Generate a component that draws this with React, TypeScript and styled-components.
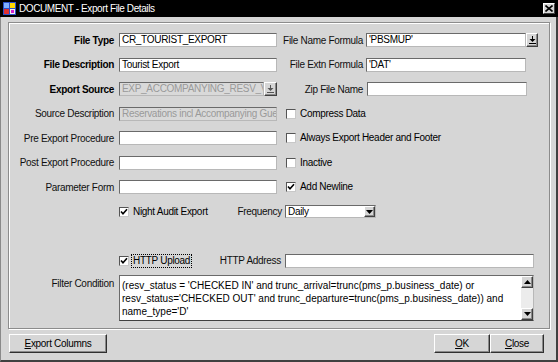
import React from 'react';
import styled, { createGlobalStyle } from 'styled-components';

const FONT = `"Liberation Sans", Arial, sans-serif`;
const GRAY = '#d6d6d6';

const GlobalStyle = createGlobalStyle`
  html, body { margin: 0; padding: 0; background: ${GRAY}; }
  body { width: 558px; height: 362px; overflow: hidden; font-family: ${FONT}; font-size: 10px; letter-spacing: -0.3px; color: #000; }
  * { box-sizing: border-box; }
`;

const Window = styled.div`
  width: 558px;
  height: 362px;
  display: flex;
  flex-direction: column;
  background: ${GRAY};
`;

const TitleBar = styled.div`
  height: 17px;
  background: #000;
  color: #fff;
  display: flex;
  align-items: center;
  padding: 0 3px 0 3px;
  gap: 3px;
`;

const TitleText = styled.span`
  flex: 1;
  line-height: 17px;
  font-size: 10px;
  letter-spacing: -0.4px;
`;

const CloseBox = styled.div`
  width: 12px;
  height: 11px;
  background: ${GRAY};
  border: 1px solid;
  border-color: #fff #404040 #404040 #fff;
  display: flex;
  align-items: center;
  justify-content: center;
`;

const Body = styled.div`
  flex: 1;
  display: flex;
  flex-direction: column;
  border-left: 1px solid #8a8a8a;
  border-right: 2px solid #404040;
  border-bottom: 2px solid #404040;
  padding: 5px 6px 0 7px;
`;

const Panel = styled.div`
  height: 307px;
  border: 1px solid #8c8c8c;
  box-shadow: inset 1px 1px 0 #fff, 1px 1px 0 #fff;
  padding: 5px 0 0 0;
  display: flex;
  flex-direction: column;
`;

const Row = styled.div<{ $h?: number }>`
  display: flex;
  align-items: center;
  height: ${p => p.$h ?? 24.5}px;
`;

const TopRow = styled.div`
  display: flex;
  align-items: flex-start;
  margin-top: 2px;
`;

const Label = styled.span<{ $w: number; $bold?: boolean; $mr?: number; $pt?: number }>`
  width: ${p => p.$w}px;
  flex-shrink: 0;
  display: flex;
  justify-content: flex-end;
  margin-right: ${p => p.$mr ?? 5}px;
  padding-top: ${p => p.$pt ?? 0}px;
  font-weight: ${p => (p.$bold ? 700 : 400)};
  white-space: nowrap;
  color: ${p => (p.$bold ? '#000' : '#101010')};
`;

const Input = styled.div<{ $w: number; $disabled?: boolean }>`
  width: ${p => p.$w}px;
  flex-shrink: 0;
  height: 14px;
  background: ${p => (p.$disabled ? '#d9d9d9' : '#fff')};
  color: ${p => (p.$disabled ? '#9a9a9a' : '#000')};
  border: 1px solid;
  border-color: #6a6a6a #b8b8b8 #b8b8b8 #6a6a6a;
  padding: 0 2px;
  line-height: 12px;
  white-space: nowrap;
  overflow: hidden;
`;

const FieldGroup = styled.div<{ $w: number }>`
  display: flex;
  width: ${p => p.$w}px;
  flex-shrink: 0;
`;

const RaisedBtn = styled.div<{ $w: number; $h: number }>`
  width: ${p => p.$w}px;
  height: ${p => p.$h}px;
  background: ${GRAY};
  border: 1px solid;
  border-color: #fff #404040 #404040 #fff;
  box-shadow: inset -1px -1px 0 #8a8a8a;
  display: flex;
  align-items: center;
  justify-content: center;
  flex-shrink: 0;
`;

const Check = styled.div<{ $ml?: number }>`
  display: flex;
  align-items: center;
  margin-left: ${p => p.$ml ?? 0}px;
`;

const Box = styled.div`
  width: 10px;
  height: 10px;
  background: #fff;
  border: 1px solid;
  border-color: #555 #c8c8c8 #c8c8c8 #555;
  display: flex;
  align-items: center;
  justify-content: center;
  margin-right: 3px;
`;

const CheckText = styled.span<{ $focus?: boolean }>`
  white-space: nowrap;
  padding: 0 1px;
  outline: ${p => (p.$focus ? '1px dotted #000' : 'none')};
  line-height: 12px;
`;

const CheckCol = styled.div`
  width: 100px;
  flex-shrink: 0;
  display: flex;
`;

const Select = styled.div`
  width: 91px;
  height: 13px;
  background: #fff;
  border: 1px solid;
  border-color: #6a6a6a #b8b8b8 #b8b8b8 #6a6a6a;
  display: flex;
  align-items: center;
  padding-left: 2px;
  justify-content: space-between;
`;

const TextArea = styled.div`
  width: 415px;
  height: 46px;
  background: #fff;
  border: 1px solid;
  border-color: #6a6a6a #b8b8b8 #404040 #6a6a6a;
  display: flex;
`;

const AreaText = styled.div`
  flex: 1;
  padding: 3px 2px 0 2px;
  line-height: 13px;
  letter-spacing: 0;
  white-space: pre;
  overflow: hidden;
`;

const ScrollBar = styled.div`
  width: 12px;
  display: flex;
  flex-direction: column;
  justify-content: space-between;
  background: #ececec;
`;

const Footer = styled.div`
  display: flex;
  justify-content: space-between;
  padding-top: 5px;
  padding-left: 1px;
  padding-right: 6px;
`;

const ButtonRow = styled.div`
  display: flex;
`;

const Button = styled.div<{ $w: number }>`
  width: ${p => p.$w}px;
  height: 19px;
  background: ${GRAY};
  border: 1px solid;
  border-color: #fff #303030 #303030 #fff;
  box-shadow: inset -1px -1px 0 #8a8a8a;
  display: flex;
  align-items: center;
  justify-content: center;
  u { text-decoration: underline; }
`;

const AppIcon = () => (
  <svg width="13" height="13" viewBox="0 0 13 13">
    <rect x="0" y="0" width="13" height="13" fill="#2a50c8" />
    <rect x="1" y="1" width="5" height="5" fill="#7fb0ff" />
    <rect x="7" y="1" width="5" height="5" fill="#ffd800" />
    <rect x="1" y="7" width="5" height="5" fill="#e03030" />
    <rect x="7" y="7" width="5" height="5" fill="#f0f0f0" />
    <rect x="8" y="8" width="3" height="3" fill="#d020d0" />
  </svg>
);

const CloseX = () => (
  <svg width="8" height="7" viewBox="0 0 8 7">
    <path d="M0.5 0.5 L7.5 6.5 M7.5 0.5 L0.5 6.5" stroke="#000" strokeWidth="1.6" />
  </svg>
);

const DownBar = ({ dim }: { dim?: boolean }) => (
  <svg width="7" height="8" viewBox="0 0 7 8">
    <g fill={dim ? '#555' : '#000'}>
      <rect x="3" y="0" width="1" height="3" />
      <path d="M0.5 3 L6.5 3 L3.5 6 Z" />
      <rect x="0" y="7" width="7" height="1" />
    </g>
  </svg>
);

const Tri = ({ up }: { up?: boolean }) => (
  <svg width="7" height="4" viewBox="0 0 7 4">
    <path d={up ? 'M3.5 0 L7 4 L0 4 Z' : 'M0 0 L7 0 L3.5 4 Z'} fill="#000" />
  </svg>
);

const Tick = () => (
  <svg width="8" height="8" viewBox="0 0 8 8">
    <path d="M1 3.5 L3 5.8 L7 1.2" stroke="#000" strokeWidth="1.6" fill="none" />
  </svg>
);

const CheckBox = ({ checked, label, ml, focus }: { checked?: boolean; label: string; ml?: number; focus?: boolean }) => (
  <Check $ml={ml}>
    <Box>{checked && <Tick />}</Box>
    <CheckText $focus={focus}>{label}</CheckText>
  </Check>
);

export default function App() {
  return (
    <>
      <GlobalStyle />
      <Window>
        <TitleBar>
          <AppIcon />
          <TitleText>DOCUMENT - Export File Details</TitleText>
          <CloseBox><CloseX /></CloseBox>
        </TitleBar>
        <Body>
          <Panel>
            <Row>
              <Label $w={105} $bold>File Type</Label>
              <Input $w={158}>CR_TOURIST_EXPORT</Input>
              <Label $w={86} $mr={3}>File Name Formula</Label>
              <FieldGroup $w={172}>
                <Input $w={160}>'PBSMUP'</Input>
                <RaisedBtn $w={12} $h={14}><DownBar /></RaisedBtn>
              </FieldGroup>
            </Row>
            <Row>
              <Label $w={105} $bold>File Description</Label>
              <Input $w={158}>Tourist Export</Input>
              <Label $w={86} $mr={3}>File Extn Formula</Label>
              <Input $w={160}>'DAT'</Input>
            </Row>
            <Row>
              <Label $w={105} $bold>Export Source</Label>
              <FieldGroup $w={158}>
                <Input $w={145} $disabled>EXP_ACCOMPANYING_RESV_VIEW</Input>
                <RaisedBtn $w={13} $h={14}><DownBar dim /></RaisedBtn>
              </FieldGroup>
              <Label $w={86} $mr={4}>Zip File Name</Label>
              <Input $w={160}></Input>
            </Row>
            <Row>
              <Label $w={105}>Source Description</Label>
              <Input $w={158} $disabled>Reservations incl Accompanying Guests</Input>
              <CheckBox label="Compress Data" ml={9} />
            </Row>
            <Row>
              <Label $w={105}>Pre Export Procedure</Label>
              <Input $w={158}></Input>
              <CheckBox label="Always Export Header and Footer" ml={9} />
            </Row>
            <Row>
              <Label $w={105}>Post Export Procedure</Label>
              <Input $w={158}></Input>
              <CheckBox label="Inactive" ml={9} />
            </Row>
            <Row>
              <Label $w={105}>Parameter Form</Label>
              <Input $w={158}></Input>
              <CheckBox label="Add Newline" checked ml={9} />
            </Row>
            <Row>
              <Label $w={105}></Label>
              <CheckCol><CheckBox label="Night Audit Export" checked /></CheckCol>
              <Label $w={63} $mr={3}>Frequency</Label>
              <Select>
                <span>Daily</span>
                <RaisedBtn $w={11} $h={11}><Tri /></RaisedBtn>
              </Select>
            </Row>
            <Row />
            <Row>
              <Label $w={105}></Label>
              <CheckCol><CheckBox label="HTTP Upload" checked focus /></CheckCol>
              <Label $w={62} $mr={4}>HTTP Address</Label>
              <Input $w={249}></Input>
            </Row>
            <TopRow>
              <Label $w={105} $pt={3}>Filter Condition</Label>
              <TextArea>
                <AreaText>{"(resv_status = 'CHECKED IN' and trunc_arrival=trunc(pms_p.business_date) or\nresv_status='CHECKED OUT' and trunc_departure=trunc(pms_p.business_date)) and\nname_type='D'"}</AreaText>
                <ScrollBar>
                  <RaisedBtn $w={12} $h={12}><Tri up /></RaisedBtn>
                  <RaisedBtn $w={12} $h={12}><Tri /></RaisedBtn>
                </ScrollBar>
              </TextArea>
            </TopRow>
          </Panel>
          <Footer>
            <Button $w={98}><span><u>E</u>xport Columns</span></Button>
            <ButtonRow>
              <Button $w={56}><span><u>O</u>K</span></Button>
              <Button $w={54}><span><u>C</u>lose</span></Button>
            </ButtonRow>
          </Footer>
        </Body>
      </Window>
    </>
  );
}
